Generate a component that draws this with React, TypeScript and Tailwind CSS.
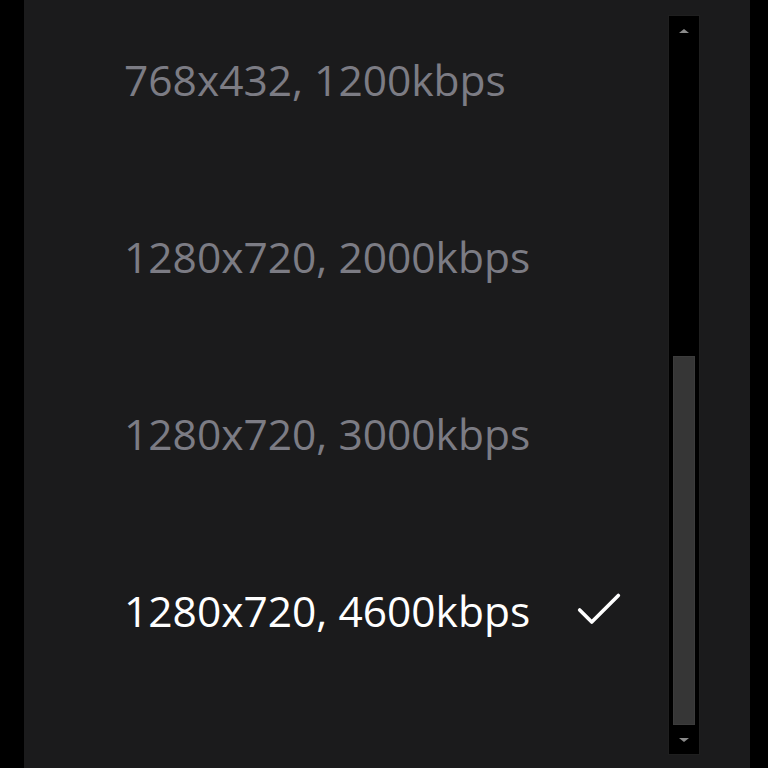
import { Check } from 'lucide-react'

const options = [
    { label: '768x432, 1200kbps', selected: false },
    { label: '1280x720, 2000kbps', selected: false },
    { label: '1280x720, 3000kbps', selected: false },
    { label: '1280x720, 4600kbps', selected: true },
]

const App = () => {
    return (
        <div className="flex h-[768px] w-[768px] overflow-hidden bg-black" style={{ fontFamily: '"Open Sans", "Noto Sans", sans-serif' }}>
            <div className="w-[24px] shrink-0" />
            <div className="flex w-[726px] shrink-0 bg-[#1b1b1c]">
                <div className="flex-1 overflow-hidden">
                    <div className="-mt-[8px] flex flex-col pl-[100px]">
                        {options.map((o) => (
                            <div key={o.label} className="flex h-[177px] items-center">
                                <span
                                    className={
                                        o.selected
                                            ? 'w-[446px] text-[42.5px] leading-none text-white'
                                            : 'w-[446px] text-[42.5px] leading-none text-[#7c7c84]'
                                    }
                                >
                                    {o.label}
                                </span>
                                {o.selected && <Check className="-mt-[4px] h-[58px] w-[58px] text-white" strokeWidth={1.5} />}
                            </div>
                        ))}
                    </div>
                </div>
                <div className="mt-[15px] flex h-[740px] w-[32px] shrink-0 flex-col items-center border border-[#1f1f1f] bg-black">
                    <div className="flex h-[30px] w-full items-center justify-center">
                        <div className="h-0 w-0 border-x-[5px] border-b-[4px] border-x-transparent border-b-[#8a8a8a]" />
                    </div>
                    <div className="h-[310px]" />
                    <div className="h-[369px] w-[22px] border border-[#3c3c3c] bg-[#363636]" />
                    <div className="flex flex-1 w-full items-center justify-center">
                        <div className="h-0 w-0 border-x-[5px] border-t-[4px] border-x-transparent border-t-[#8a8a8a]" />
                    </div>
                </div>
                <div className="w-[50px] shrink-0" />
            </div>
        </div>
    )
}

export default App
